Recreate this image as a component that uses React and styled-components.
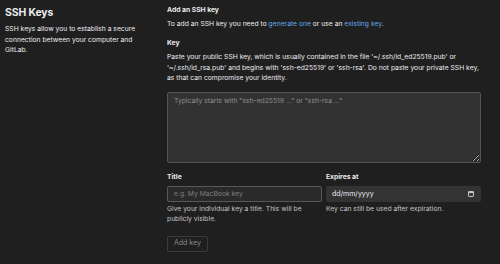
import React from "react";
import styled, { createGlobalStyle } from "styled-components";

const GlobalStyle = createGlobalStyle`
  html, body {
    margin: 0;
    padding: 0;
    background: #1f1f1f;
  }
  body {
    font-family: Inter, "Noto Sans", "Liberation Sans", sans-serif;
    color: #ececef;
    font-size: 6.75px;
    line-height: 10.6px;
  }
`;

const Page = styled.div`
  display: grid;
  grid-template-columns: 162px 314px;
  padding: 5px 0 0 5px;
  width: 500px;
  height: 264px;
  box-sizing: border-box;
`;

const Intro = styled.div`
  display: flex;
  flex-direction: column;
  padding-right: 14px;
`;

const PageTitle = styled.h2`
  margin: 0;
  font-size: 10.4px;
  line-height: 15px;
  font-weight: 700;
  letter-spacing: -0.1px;
`;

const IntroText = styled.p`
  margin: 4px 0 0;
`;

const Form = styled.div`
  display: flex;
  flex-direction: column;
`;

const SectionTitle = styled.h3`
  margin: 0;
  font-size: inherit;
  font-weight: 700;
`;

const Text = styled.p`
  margin: ${(p) => p.$top || 0}px 0 0;
`;

const Link = styled.a`
  color: #63a6e9;
  text-decoration: none;
`;

const Label = styled.label`
  display: block;
  font-weight: 700;
  margin-top: ${(p) => p.$top || 0}px;
`;

const KeyArea = styled.textarea`
  display: block;
  margin-top: 8px;
  width: 314px;
  height: 71px;
  box-sizing: border-box;
  padding: 3px 6px;
  background: #323232;
  border: 1px solid #555459;
  border-radius: 2px;
  color: #ececef;
  font: inherit;
  resize: vertical;
  outline: none;
  &::placeholder {
    color: #8f8e93;
  }
`;

const Row = styled.div`
  display: grid;
  grid-template-columns: 155px 155px;
  column-gap: 4px;
  margin-top: 9px;
`;

const Field = styled.div`
  display: flex;
  flex-direction: column;
`;

const TextInput = styled.input`
  display: block;
  margin-top: 3.6px;
  height: 16px;
  box-sizing: border-box;
  padding: 0 6px;
  background: #2a2a2a;
  border: 1px solid #58575c;
  border-radius: 2px;
  color: #ececef;
  font: inherit;
  outline: none;
  &::placeholder {
    color: #7e7d82;
  }
`;

const DateBox = styled.div`
  display: flex;
  align-items: center;
  justify-content: space-between;
  margin-top: 3.6px;
  height: 16px;
  box-sizing: border-box;
  padding: 0 7px 0 6px;
  background: #333333;
  border-radius: 2px;
`;

const DateInput = styled.input`
  flex: 1;
  min-width: 0;
  padding: 0;
  border: none;
  background: transparent;
  color: #ececef;
  font: inherit;
  font-size: 7px;
  outline: none;
  &::placeholder {
    color: #ececef;
  }
`;

const Help = styled.p`
  margin: 1.6px 0 0;
  color: #c4c3c8;
`;

const Actions = styled.div`
  margin-top: 11px;
`;

const Button = styled.button`
  height: 16px;
  padding: 0 6px;
  background: transparent;
  border: 1px solid #3b3b3e;
  border-radius: 2px;
  color: #8b8a8f;
  font: inherit;
  font-size: 7px;
  cursor: not-allowed;
`;

const CalendarIcon = () => (
  <svg width="6" height="6" viewBox="0 0 6 6" aria-hidden="true">
    <rect x="0.5" y="0.5" width="5" height="5" rx="0.6" fill="none" stroke="#c8c8cc" strokeWidth="1" />
    <rect x="0.5" y="0.5" width="5" height="1.6" fill="#c8c8cc" />
  </svg>
);

export default function App() {
  return (
    <>
      <GlobalStyle />
      <Page>
        <Intro>
          <PageTitle>SSH Keys</PageTitle>
          <IntroText>
            SSH keys allow you to establish a secure connection between your computer and GitLab.
          </IntroText>
        </Intro>
        <Form>
          <SectionTitle>Add an SSH key</SectionTitle>
          <Text $top={3.4}>
            To add an SSH key you need to <Link href="#">generate one</Link> or use an{" "}
            <Link href="#">existing key</Link>.
          </Text>
          <Label $top={8.4}>Key</Label>
          <Text $top={3.4}>
            Paste your public SSH key, which is usually contained in the file '~/.ssh/id_ed25519.pub' or
            '~/.ssh/id_rsa.pub' and begins with 'ssh-ed25519' or 'ssh-rsa'. Do not paste your private SSH key,
            as that can compromise your identity.
          </Text>
          <KeyArea placeholder={'Typically starts with "ssh-ed25519 …" or "ssh-rsa …"'} />
          <Row>
            <Field>
              <Label>Title</Label>
              <TextInput placeholder="e.g. My MacBook key" />
              <Help>Give your individual key a title. This will be publicly visible.</Help>
            </Field>
            <Field>
              <Label>Expires at</Label>
              <DateBox>
                <DateInput placeholder="dd/mm/yyyy" />
                <CalendarIcon />
              </DateBox>
              <Help>Key can still be used after expiration.</Help>
            </Field>
          </Row>
          <Actions>
            <Button disabled>Add key</Button>
          </Actions>
        </Form>
      </Page>
    </>
  );
}
